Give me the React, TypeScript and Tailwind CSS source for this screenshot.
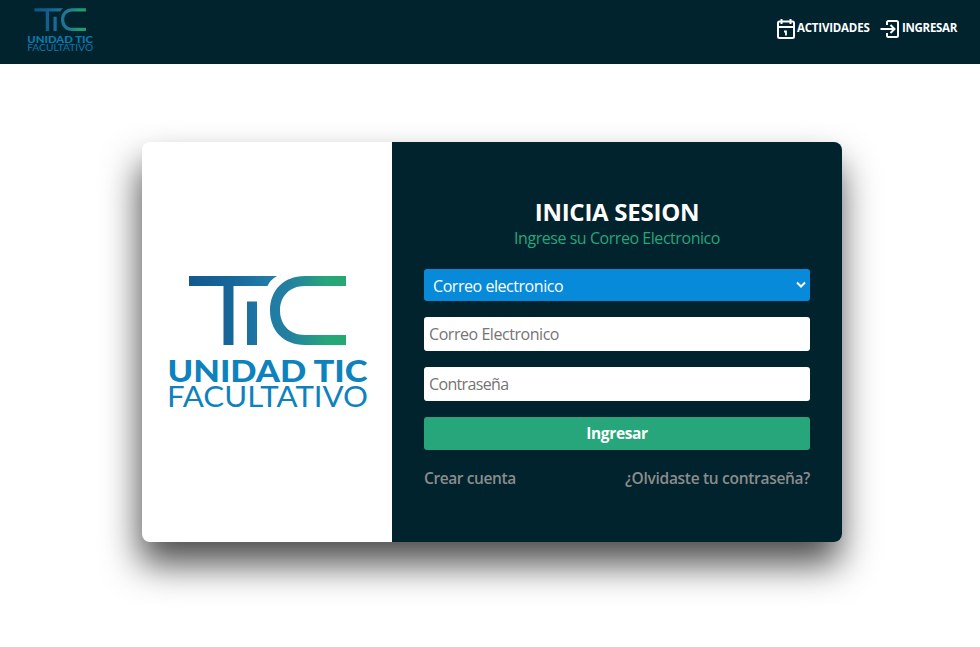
import React from "react";

function Logo({ id, className }: { id: string; className: string }) {
  return (
    <svg viewBox="0 0 200 134" className={`${className} overflow-visible`} aria-label="Unidad TIC Facultativo">
      <defs>
        <linearGradient id={id} gradientUnits="userSpaceOnUse" x1="20" y1="0" x2="178" y2="0">
          <stop offset="0" stopColor="#12598c" />
          <stop offset="0.28" stopColor="#17669a" />
          <stop offset="0.5" stopColor="#1f7ba6" />
          <stop offset="0.65" stopColor="#2380a0" />
          <stop offset="0.88" stopColor="#26a67a" />
          <stop offset="1" stopColor="#26a872" />
        </linearGradient>
      </defs>
      <g fill={`url(#${id})`}>
        <path d="M22 1H110Q103 5 100.500 11H66.500V70H56.500V11H22Z" />
        <path d="M80 26.500H90V70H80Z" />
        <path d="M179 1H138C116 1 103 16 103 35.500S116 70 138 70H179V60H138C122 60 113 49 113 35.500S122 11 138 11H179Z" />
      </g>
      <g fill="#0e82bd" fontFamily="Lato, sans-serif">
        <text x="0.500" y="106.500" fontSize="31" fontWeight="900" textLength="200" lengthAdjust="spacingAndGlyphs">UNIDAD TIC</text>
        <text x="0" y="132" fontSize="28.500" fontWeight="400" textLength="201" lengthAdjust="spacingAndGlyphs">FACULTATIVO</text>
      </g>
    </svg>
  );
}

function CalendarIcon() {
  return (
    <svg viewBox="0 0 20 22" className="h-[22px] w-5" fill="none" stroke="currentColor" strokeWidth="2">
      <rect x="2" y="3.500" width="16" height="16.500" rx="1.500" />
      <path d="M2 9H18M5.500 1V6M14.500 1V6" />
      <path d="M8 13.500H10V17.500" strokeWidth="1.800" />
    </svg>
  );
}

function LoginIcon() {
  return (
    <svg viewBox="0 0 20 20" className="h-5 w-5" fill="none" stroke="currentColor" strokeWidth="2">
      <path d="M7 6V3.500Q7 2 8.500 2H16.500Q18 2 18 3.500V16.500Q18 18 16.500 18H8.500Q7 18 7 16.500V14M0.500 10H14M10.500 6L14.500 10L10.500 14" />
    </svg>
  );
}

export default function App() {
  return (
    <div className="h-[647px] overflow-hidden bg-white font-['Open_Sans','Noto_Sans',sans-serif]">
      <header className="flex h-16 items-start justify-between bg-[#00232e] pl-[27px] pr-[22px] text-white">
        <Logo id="nav-logo" className="mt-2 h-11 w-[66px] opacity-90" />
        <nav className="mt-[18px] flex items-center gap-[10px] text-[11.5px] font-bold leading-5">
          <a className="flex items-center gap-[1px]">
            <CalendarIcon />
            <span className="w-[73px] -translate-y-px whitespace-nowrap tracking-[-0.2px]">ACTIVIDADES</span>
          </a>
          <a className="flex items-center gap-[2px]">
            <LoginIcon />
            <span className="w-[56px] -translate-y-px whitespace-nowrap tracking-[-0.3px]">INGRESAR</span>
          </a>
        </nav>
      </header>
      <main className="flex pl-[142px] pt-[78px]">
        <section className="flex h-[400px] w-[700px] overflow-hidden rounded-lg bg-white shadow-[-2px_22px_36px_rgba(0,0,0,0.7)]">
          <div className="flex w-[250px] items-center justify-center">
            <Logo id="card-logo" className="h-[134px] w-[200px]" />
          </div>
          <form className="flex w-[450px] flex-col bg-[#00232e] px-8 pt-[54px] text-base">
            <h1 className="text-center text-2xl font-bold leading-8 tracking-[-0.25px] text-white">INICIA SESION</h1>
            <p className="text-center leading-5 tracking-[-0.45px] text-[#26a67a]">Ingrese su Correo Electronico</p>
            <div className="mt-[21px] flex h-8 items-center justify-between rounded-[3px] bg-[#078ad9] pl-[9px] pr-1 text-white">
              <span className="pt-0.5 tracking-[-0.45px]">Correo electronico</span>
              <svg viewBox="0 0 10 8" className="h-2 w-[10px]" fill="none" stroke="currentColor" strokeWidth="2">
                <path d="M1 1.500L5 5.500L9 1.500" />
              </svg>
            </div>
            <input className="mt-4 h-[34px] rounded-[3px] bg-white px-[5px] tracking-[-0.45px] placeholder:text-[#757575]" placeholder="Correo Electronico" />
            <input type="password" className="mt-4 h-[34px] rounded-[3px] bg-white px-[5px] tracking-[-0.65px] placeholder:text-[#757575]" placeholder="Contraseña" />
            <button type="button" className="mt-4 h-[33px] rounded-[3px] bg-[#26a67a] pt-px text-[15.5px] font-bold tracking-[-0.35px] text-white">Ingresar</button>
            <div className="mt-4 flex justify-between text-[15.5px] font-semibold leading-6 tracking-[-0.3px] text-[#8c8c8c]">
              <a className="tracking-[-0.4px]">Crear cuenta</a>
              <a>¿Olvidaste tu contraseña?</a>
            </div>
          </form>
        </section>
      </main>
    </div>
  );
}
